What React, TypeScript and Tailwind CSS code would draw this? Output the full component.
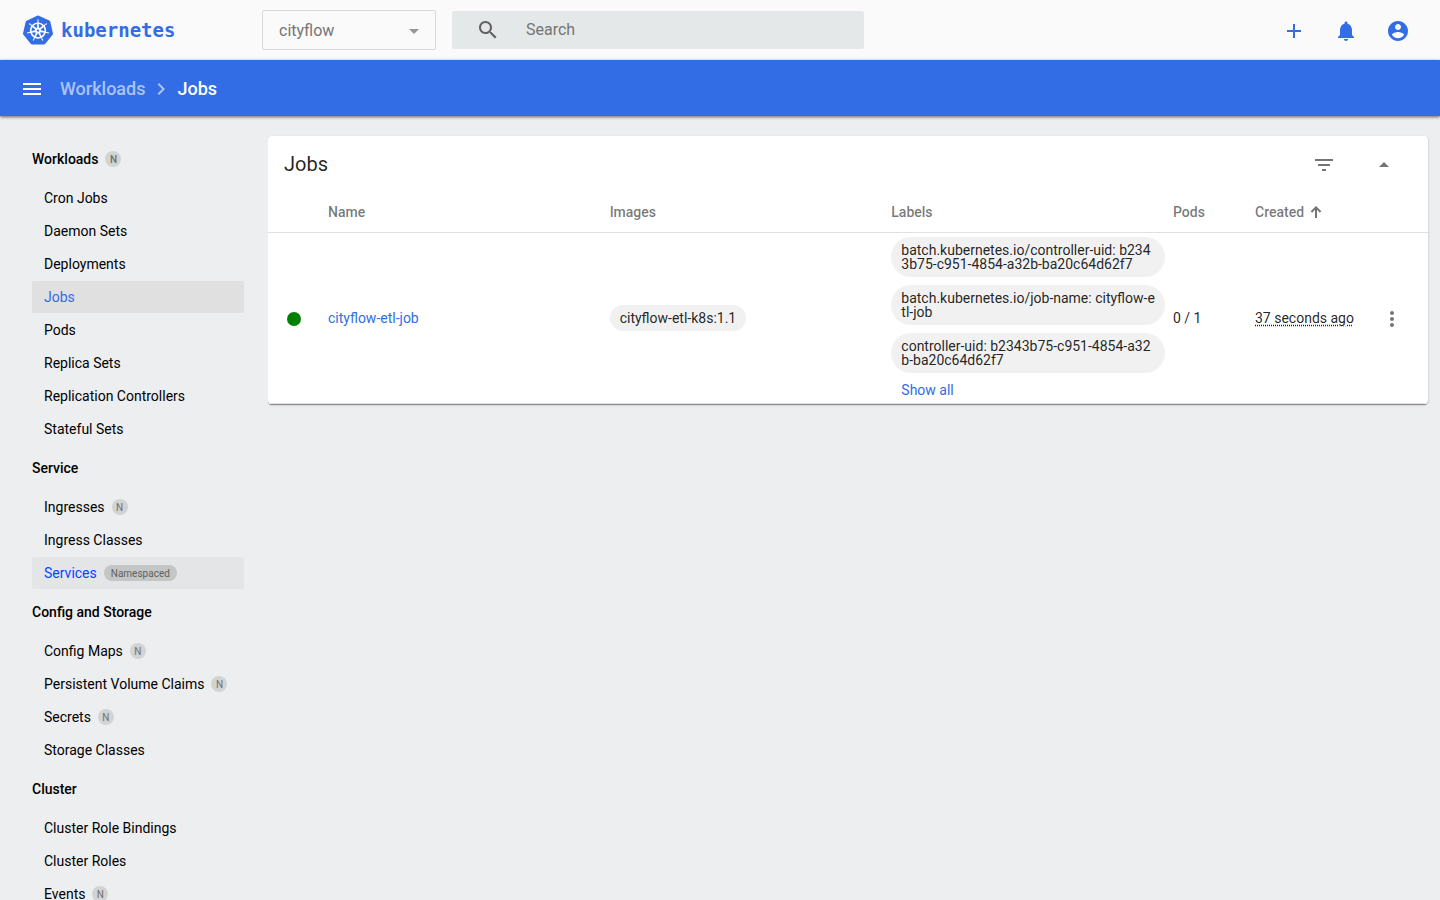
import React from 'react';
import { SiKubernetes } from 'react-icons/si';

const ICONS = {
  add: 'M19 13h-6v6h-2v-6H5v-2h6V5h2v6h6v2z',
  bell: 'M12 22c1.1 0 2-.9 2-2h-4c0 1.1.89 2 2 2zm6-6v-5c0-3.07-1.64-5.64-4.5-6.32V4c0-.83-.67-1.5-1.5-1.5s-1.5.67-1.5 1.5v.68C7.63 5.36 6 7.92 6 11v5l-2 2v1h16v-1l-2-2z',
  account:
    'M12 2C6.48 2 2 6.48 2 12s4.48 10 10 10 10-4.48 10-10S17.52 2 12 2zm0 3c1.66 0 3 1.34 3 3s-1.34 3-3 3-3-1.34-3-3 1.34-3 3-3zm0 14.2c-2.5 0-4.71-1.28-6-3.22.03-1.99 4-3.08 6-3.08 1.99 0 5.97 1.09 6 3.08-1.29 1.94-3.5 3.22-6 3.22z',
  menu: 'M3 18h18v-2H3v2zm0-5h18v-2H3v2zm0-7v2h18V6H3z',
  search:
    'M15.5 14h-.79l-.28-.27C15.41 12.59 16 11.11 16 9.5 16 5.91 13.09 3 9.5 3S3 5.91 3 9.5 5.91 16 9.5 16c1.61 0 3.09-.59 4.23-1.57l.27.28v.79l5 4.99L20.49 19l-4.99-5zm-6 0C7.01 14 5 11.99 5 9.5S7.01 5 9.5 5 14 7.01 14 9.5 11.99 14 9.5 14z',
  chevron: 'M10 6L8.59 7.41 13.17 12l-4.58 4.59L10 18l6-6z',
  filter: 'M10 18h4v-2h-4v2zM3 6v2h18V6H3zm3 7h12v-2H6v2z',
  dropUp: 'M7 14l5-5 5 5z',
  dropDown: 'M7 10l5 5 5-5z',
  more: 'M12 8c1.1 0 2-.9 2-2s-.9-2-2-2-2 .9-2 2 .9 2 2 2zm0 2c-1.1 0-2 .9-2 2s.9 2 2 2 2-.9 2-2-.9-2-2-2zm0 6c-1.1 0-2 .9-2 2s.9 2 2 2 2-.9 2-2-.9-2-2-2z',
};

function Icon({ name, className = 'size-6' }: { name: keyof typeof ICONS; className?: string }) {
  return (
    <svg viewBox="0 0 24 24" fill="currentColor" aria-hidden="true" className={`shrink-0 ${className}`}>
      <path d={ICONS[name]} />
    </svg>
  );
}

function SortArrow() {
  return (
    <svg viewBox="0 0 12 12" fill="none" stroke="currentColor" strokeWidth="2" aria-hidden="true" className="size-3">
      <path d="M6 12V1.6M1.4 6L6 1.4 10.6 6" />
    </svg>
  );
}

type NavItem = { label: string; namespaced?: boolean; active?: boolean; hovered?: boolean };
type NavGroup = { title: string; namespaced?: boolean; items: NavItem[] };

const NAV: NavGroup[] = [
  {
    title: 'Workloads',
    namespaced: true,
    items: [
      { label: 'Cron Jobs' },
      { label: 'Daemon Sets' },
      { label: 'Deployments' },
      { label: 'Jobs', active: true },
      { label: 'Pods' },
      { label: 'Replica Sets' },
      { label: 'Replication Controllers' },
      { label: 'Stateful Sets' },
    ],
  },
  {
    title: 'Service',
    items: [
      { label: 'Ingresses', namespaced: true },
      { label: 'Ingress Classes' },
      { label: 'Services', namespaced: true, hovered: true },
    ],
  },
  {
    title: 'Config and Storage',
    items: [
      { label: 'Config Maps', namespaced: true },
      { label: 'Persistent Volume Claims', namespaced: true },
      { label: 'Secrets', namespaced: true },
      { label: 'Storage Classes' },
    ],
  },
  {
    title: 'Cluster',
    items: [
      { label: 'Cluster Role Bindings' },
      { label: 'Cluster Roles' },
      { label: 'Events', namespaced: true },
    ],
  },
];

const LABELS = [
  'batch.kubernetes.io/controller-uid: b2343b75-c951-4854-a32b-ba20c64d62f7',
  'batch.kubernetes.io/job-name: cityflow-etl-job',
  'controller-uid: b2343b75-c951-4854-a32b-ba20c64d62f7',
];

function Badge({ expanded }: { expanded?: boolean }) {
  if (expanded) {
    return (
      <span className="ml-[7px] flex h-4 items-center rounded-full bg-[#c4c5c5] px-[7px] pt-px text-[10px] leading-4 font-normal text-[#616161]">
        Namespaced
      </span>
    );
  }
  return (
    <span className="ml-[7px] flex size-4 items-center justify-center rounded-full bg-[#d2d3d3] pt-px text-[10px] leading-4 text-[#707070]">
      N
    </span>
  );
}

function NavLink({ item }: { item: NavItem }) {
  let look = 'text-black';
  if (item.active) look = 'bg-[#e0e0e0] text-[#326de6]';
  if (item.hovered) look = 'bg-[#e4e5e7] text-[#0645ff]';
  return (
    <a href="#" className={`flex h-8 items-center rounded-xs px-3 text-sm ${look}`}>
      {item.label}
      {item.namespaced && <Badge expanded={item.hovered} />}
    </a>
  );
}

function Sidebar() {
  return (
    <nav className="w-[268px] shrink-0 overflow-y-auto pt-5 pr-6 pl-8 [scrollbar-width:none]">
      {NAV.map((group) => (
        <section key={group.title}>
          <h3 className="flex h-[46px] items-center text-sm font-medium text-black">
            {group.title}
            {group.namespaced && <Badge />}
          </h3>
          <div className="flex flex-col gap-px">
            {group.items.map((item) => (
              <NavLink key={item.label} item={item} />
            ))}
          </div>
        </section>
      ))}
    </nav>
  );
}

function Header() {
  return (
    <header className="flex h-15 items-center bg-[#fafafa]">
      <a href="#" className="flex w-[262px] shrink-0 items-center gap-2 pl-[23px] text-[#326de6]">
        <SiKubernetes className="size-[30px]" />
        <span className="font-['DejaVu_Sans_Mono',monospace] text-[19px] leading-6 font-bold">kubernetes</span>
      </a>
      <div className="relative mr-4 w-[174px] shrink-0">
        <select
          aria-label="Namespace"
          className="h-10 w-full appearance-none rounded-xs border border-[#d8d8d8] bg-transparent px-4 pt-0.5 text-base text-[#757575]"
        >
          <option>cityflow</option>
        </select>
        <Icon name="dropDown" className="pointer-events-none absolute top-[9px] right-[10px] size-6 text-[#969696]" />
      </div>
      <label className="flex h-[38px] w-full max-w-[412px] items-center rounded-xs bg-[#e4e8e9] pl-6 text-[#616161]">
        <Icon name="search" />
        <input
          type="search"
          placeholder="Search"
          aria-label="Search"
          className="ml-[26px] min-w-0 flex-1 bg-transparent text-base outline-none placeholder:text-[#757575]"
        />
      </label>
      <div className="ml-auto flex gap-7 pt-0.5 pr-[30px] text-[#326de6]">
        <button type="button" aria-label="Create new resource">
          <Icon name="add" />
        </button>
        <button type="button" aria-label="Notifications">
          <Icon name="bell" />
        </button>
        <button type="button" aria-label="User">
          <Icon name="account" />
        </button>
      </div>
    </header>
  );
}

function Breadcrumbs() {
  return (
    <div className="relative flex h-14 items-center bg-[#326de6] pt-0.5 pl-5 text-lg font-medium text-white shadow-[0_1px_3px_rgba(0,0,0,0.6)]">
      <button type="button" aria-label="Toggle menu">
        <Icon name="menu" />
      </button>
      <a href="#" className="ml-4 text-white/60">
        Workloads
      </a>
      <Icon name="chevron" className="mx-1 size-6 text-white/60" />
      <span>Jobs</span>
    </div>
  );
}

const CHIP = 'rounded-[20px] px-[10px] py-[6px] text-sm leading-[14px] break-all';

function JobsCard() {
  return (
    <section className="rounded-sm bg-white shadow-[0_1px_1px_rgba(0,0,0,0.4),0_1px_3px_rgba(0,0,0,0.12)]">
      <div className="flex h-14 items-center pr-8 pl-4">
        <h2 className="text-xl text-black/87">Jobs</h2>
        <div className="ml-auto flex gap-9 pt-0.5 text-[#757575]">
          <button type="button" aria-label="Filter">
            <Icon name="filter" />
          </button>
          <button type="button" aria-label="Collapse">
            <Icon name="dropUp" />
          </button>
        </div>
      </div>
      <table className="w-full table-fixed border-collapse text-left text-sm text-black/87">
        <thead>
          <tr className="h-10 border-b border-[#e0e0e0] text-black/54 [&>th]:p-0 [&>th]:font-medium">
            <th className="w-[60px]" aria-label="Status" />
            <th>Name</th>
            <th>Images</th>
            <th>Labels</th>
            <th className="w-[82px]">Pods</th>
            <th className="w-[121px]">
              <span className="flex items-center gap-[6px]">
                Created
                <SortArrow />
              </span>
            </th>
            <th className="w-[52px]" aria-label="Actions" />
          </tr>
        </thead>
        <tbody>
          <tr className="border-b border-[#e0e0e0]">
            <td className="pt-0.5">
              <span className="ml-[19px] block size-[14px] rounded-full bg-[#008000]" />
            </td>
            <td>
              <a href="#" className="text-[#326de6]">
                cityflow-etl-job
              </a>
            </td>
            <td>
              <div className={`${CHIP} w-fit bg-[#f1f1f1]`}>cityflow-etl-k8s:1.1</div>
            </td>
            <td>
              <div className="flex flex-col pt-1 pr-2">
                <div className="flex flex-col gap-2 pb-1">
                  {LABELS.map((label) => (
                    <div key={label} className={`${CHIP} bg-[#f1f1f1]`}>
                      {label}
                    </div>
                  ))}
                </div>
                <button type="button" className={`${CHIP} w-fit text-[#326de6]`}>
                  Show all
                </button>
              </div>
            </td>
            <td>0 / 1</td>
            <td>
              <span className="underline decoration-dotted underline-offset-2">37 seconds ago</span>
            </td>
            <td className="pt-0.5">
              <button type="button" aria-label="Job actions" className="ml-1 block text-[#757575]">
                <Icon name="more" />
              </button>
            </td>
          </tr>
        </tbody>
      </table>
    </section>
  );
}

export default function App() {
  return (
    <div className="flex h-screen flex-col overflow-hidden bg-[#edeef0] font-[Roboto,sans-serif]">
      <div className="shrink-0">
        <Header />
        <Breadcrumbs />
      </div>
      <div className="flex min-h-0 flex-1 overflow-hidden">
        <Sidebar />
        <main className="min-w-0 flex-1 overflow-y-auto pt-5 pr-3">
          <JobsCard />
        </main>
      </div>
    </div>
  );
}
